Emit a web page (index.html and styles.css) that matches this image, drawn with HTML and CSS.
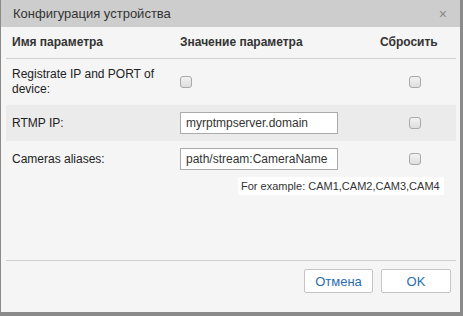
FILE: index.html
```html
<!DOCTYPE html>
<html>
<head>
    <title>Конфигурация устройства</title>
    <link rel="stylesheet" href="styles.css">
</head>
<body>
    <div class="dialog">
        <div class="title-bar">
            <span class="title">Конфигурация устройства</span>
            <span class="close">&times;</span>
        </div>

        <div class="dialog-body">
            <table class="params">
                <tr>
                    <th class="col-name">Имя параметра</th>
                    <th class="col-value">Значение параметра</th>
                    <th class="col-reset">Сбросить</th>
                </tr>
                <tr>
                    <td>Registrate IP and PORT of device:</td>
                    <td><input type="checkbox" class="check"></td>
                    <td class="reset-cell"><input type="checkbox" class="check"></td>
                </tr>
                <tr class="shaded">
                    <td>RTMP IP:</td>
                    <td><input type="text" class="text-field" value="myrptmpserver.domain"></td>
                    <td class="reset-cell"><input type="checkbox" class="check"></td>
                </tr>
                <tr>
                    <td>Cameras aliases:</td>
                    <td>
                        <div class="field-wrap">
                            <input type="text" class="text-field" value="path/stream:CameraName">
                            <div class="hint">For example: CAM1,CAM2,CAM3,CAM4</div>
                        </div>
                    </td>
                    <td class="reset-cell"><input type="checkbox" class="check"></td>
                </tr>
            </table>
        </div>

        <div class="footer">
            <button class="btn">Отмена</button>
            <button class="btn btn-ok">OK</button>
        </div>
    </div>
</body>
</html>
```

FILE: styles.css
```css
body {
    margin: 0;
    background: #8a8a8a;
    font-family: "Liberation Sans", Arial, sans-serif;
    color: #222;
}
.dialog {
    width: 459px;
    height: 312px;
    margin-left: 1px;
    background: #f5f5f5;
    display: flex;
    flex-direction: column;
}
.title-bar {
    height: 27px;
    background: #cdcdcd;
    padding: 0 12px;
    display: flex;
    justify-content: space-between;
    align-items: center;
}
.title {
    font-size: 13px;
    color: #333;
}
.close {
    font-size: 14px;
    color: #888;
    margin-right: 1px;
}
.dialog-body {
    flex: 1;
    padding: 0 4px 0 5px;
}
.params {
    width: 100%;
    border-collapse: collapse;
    font-size: 12px;
    line-height: 15px;
}
.params th {
    text-align: left;
    font-weight: bold;
    color: #333;
    padding: 8px 6px;
    border-bottom: 1px solid #cfcfcf;
}
.params td {
    padding: 8px 6px;
    vertical-align: middle;
}
.col-name {
    width: 156px;
}
.col-value {
    width: 188px;
}
.shaded {
    background: #ebebeb;
}
.shaded td,
.shaded + tr td {
    padding-top: 7px;
    padding-bottom: 7px;
}
.reset-cell {
    text-align: center;
}
.check {
    -webkit-appearance: none;
    appearance: none;
    width: 12px;
    height: 12px;
    margin: 0;
    border: 1px solid #a9a9a9;
    border-radius: 3px;
    background: linear-gradient(#f2f2f2, #dedede);
    vertical-align: middle;
}
.text-field {
    box-sizing: border-box;
    width: 158px;
    height: 22px;
    margin: 0;
    padding: 0 5px;
    border: 1px solid #ababab;
    background: #fff;
    font-family: "Liberation Sans", Arial, sans-serif;
    font-size: 12px;
    color: #333;
    vertical-align: middle;
}
.field-wrap {
    position: relative;
    display: inline-block;
    vertical-align: middle;
}
.hint {
    position: absolute;
    left: 58px;
    top: 29px;
    height: 18px;
    line-height: 18px;
    padding: 0 4px 0 3px;
    background: #fff;
    font-size: 11px;
    color: #333;
    white-space: nowrap;
}
.footer {
    height: 52px;
    margin: 0 4px 0 5px;
    border-top: 1px solid #cfcfcf;
    box-sizing: border-box;
    display: flex;
    justify-content: flex-end;
    align-items: flex-start;
    gap: 8px;
    padding: 8px 5px 0 0;
}
.btn {
    width: 69px;
    height: 24px;
    background: #fff;
    border: 1px solid #c4c4c4;
    border-radius: 2px;
    color: #2a6db0;
    font-family: "Liberation Sans", Arial, sans-serif;
    font-size: 13px;
}
.btn-ok {
    width: 70px;
}
```
